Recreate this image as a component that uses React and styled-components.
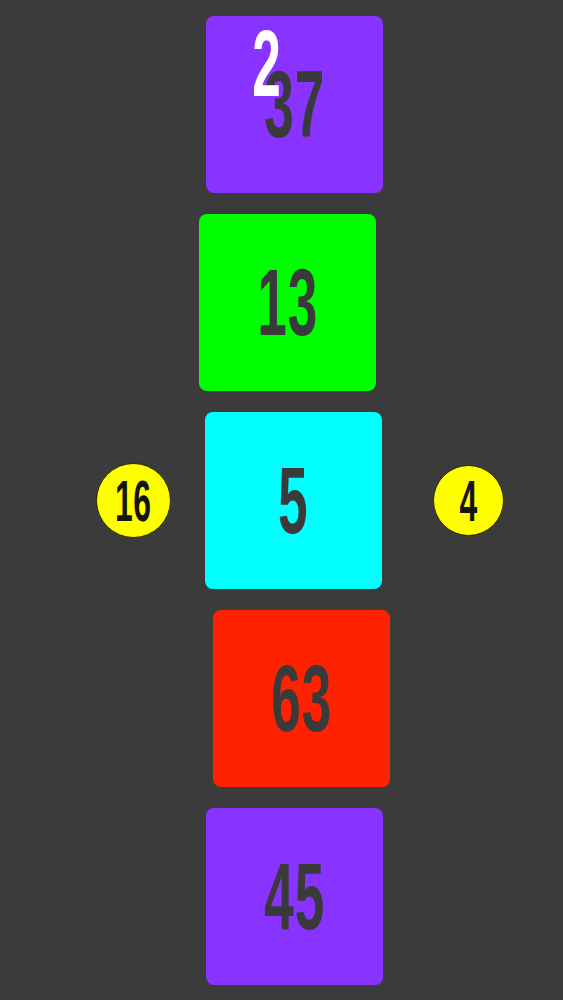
import React from "react";
import styled, { createGlobalStyle } from "styled-components";

const Global = createGlobalStyle`
  html, body {
    margin: 0;
    padding: 0;
    background: #3b3b3b;
  }
  body {
    font-family: "Liberation Sans", Arial, sans-serif;
  }
`;

const Page = styled.div`
  width: 563px;
  height: 1000px;
  box-sizing: border-box;
  padding-top: 16px;
  display: flex;
  flex-direction: column;
  gap: 21px;
  overflow: hidden;
  background: #3b3b3b;
`;

const Row = styled.div`
  display: flex;
  align-items: center;
  padding-left: ${(p) => p.$pad}px;
`;

const Tile = styled.div`
  position: relative;
  width: 177px;
  height: 177px;
  border-radius: 8px;
  background: ${(p) => p.$color};
  display: flex;
  align-items: center;
  justify-content: center;
  flex-shrink: 0;
`;

const Num = styled.span`
  display: inline-block;
  font-family: "Liberation Sans", Arial, sans-serif;
  font-weight: 700;
  font-size: 95px;
  line-height: 1;
  color: #3a3a3a;
  transform: scaleX(0.56);
  letter-spacing: 2px;
`;

const Floating = styled.span`
  position: absolute;
  left: 34px;
  top: 0px;
  display: inline-block;
  font-family: "Liberation Sans", Arial, sans-serif;
  font-weight: 700;
  font-size: 95px;
  line-height: 1;
  color: #ffffff;
  transform: scaleX(0.54);
`;

const Ball = styled.div`
  width: ${(p) => p.$size}px;
  height: ${(p) => p.$size}px;
  border-radius: 50%;
  background: #ffff00;
  border: 1px solid #2a2a00;
  box-sizing: border-box;
  display: flex;
  align-items: center;
  justify-content: center;
  flex-shrink: 0;
  margin-left: ${(p) => p.$ml || 0}px;
  margin-right: ${(p) => p.$mr || 0}px;
`;

const BallNum = styled.span`
  display: inline-block;
  font-family: "Liberation Sans", Arial, sans-serif;
  font-weight: 700;
  font-size: 58px;
  line-height: 1;
  color: #151515;
  transform: scaleX(0.55);
  letter-spacing: 1px;
`;

export default function App() {
  return (
    <>
      <Global />
      <Page>
        <Row $pad={206}>
          <Tile $color="#8833ff">
            <Num>37</Num>
            <Floating>2</Floating>
          </Tile>
        </Row>
        <Row $pad={199}>
          <Tile $color="#00ff00">
            <Num>13</Num>
          </Tile>
        </Row>
        <Row $pad={96}>
          <Ball $size={75} $mr={34}>
            <BallNum>16</BallNum>
          </Ball>
          <Tile $color="#00ffff">
            <Num>5</Num>
          </Tile>
          <Ball $size={71} $ml={51}>
            <BallNum>4</BallNum>
          </Ball>
        </Row>
        <Row $pad={213}>
          <Tile $color="#ff2200">
            <Num>63</Num>
          </Tile>
        </Row>
        <Row $pad={206}>
          <Tile $color="#8833ff">
            <Num>45</Num>
          </Tile>
        </Row>
      </Page>
    </>
  );
}
